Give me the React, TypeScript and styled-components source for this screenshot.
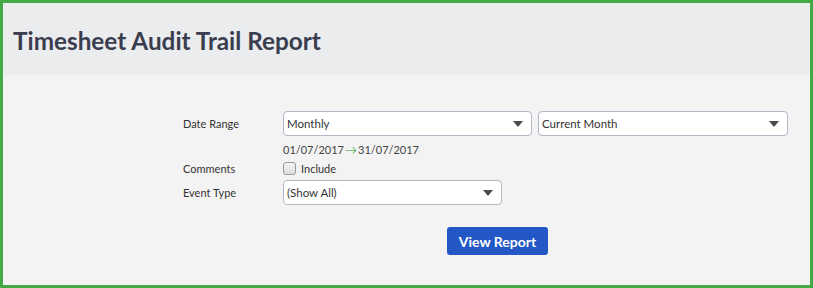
import React from "react";
import styled, { createGlobalStyle } from "styled-components";

const GlobalStyle = createGlobalStyle`
  html, body {
    margin: 0;
    padding: 0;
    background: #f3f3f3;
  }
  body {
    font-family: Lato, "Liberation Sans", sans-serif;
  }
`;

const Frame = styled.div`
  box-sizing: border-box;
  width: 813px;
  height: 288px;
  border: 3px solid #44a944;
  background: #f3f3f3;
  display: flex;
  flex-direction: column;
`;

const Header = styled.div`
  height: 72px;
  background: #ebecee;
  display: flex;
  align-items: center;
  padding-left: 10px;
`;

const Title = styled.h1`
  margin: 0;
  font-size: 24.3px;
  font-weight: 700;
  color: #3a3d4e;
  padding-top: 2px;
`;

const Form = styled.div`
  display: flex;
  flex-direction: column;
  padding: 36px 0 0 180px;
`;

const Row = styled.div<{ gap?: number }>`
  display: flex;
  align-items: center;
  margin-bottom: ${({ gap }) => gap ?? 0}px;
`;

const Label = styled.div`
  width: 100px;
  font-size: 11px;
  color: #333;
`;

const Field = styled.div`
  display: flex;
  gap: 6px;
`;

const SelectBox = styled.div<{ width: number }>`
  box-sizing: border-box;
  width: ${({ width }) => width}px;
  height: 25px;
  background: #fff;
  border: 1px solid #b7b5c6;
  border-radius: 4px;
  display: flex;
  align-items: center;
  justify-content: space-between;
  padding: 0 5px 0 3px;
  font-size: 11.5px;
  color: #333;
`;

const Caret = styled.span`
  width: 0;
  height: 0;
  border-left: 5px solid transparent;
  border-right: 5px solid transparent;
  border-top: 6px solid #4a4a4a;
  margin-right: 3px;
`;

const DateText = styled.div`
  margin-left: 100px;
  font-size: 11px;
  color: #444;
  display: flex;
  align-items: center;
  height: 25px;
  padding-top: 1px;
`;

const Arrow = styled.span`
  color: #5cb85c;
  margin: 0 1px;
  font-size: 12px;
`;

const Check = styled.span`
  box-sizing: border-box;
  width: 13px;
  height: 13px;
  border: 1px solid #9a9a9a;
  border-radius: 3px;
  background: linear-gradient(#f4f4f4, #dcdcdc);
  margin-right: 5px;
`;

const CheckLabel = styled.span`
  font-size: 11px;
  color: #333;
`;

const Button = styled.button`
  margin: 22px 0 0 264px;
  width: 101px;
  height: 28px;
  border: none;
  border-radius: 3px;
  background: #2257c5;
  color: #fff;
  font-family: Lato, "Liberation Sans", sans-serif;
  font-weight: 700;
  font-size: 14px;
  padding: 0;
`;

function Select({ value, width }: { value: string; width: number }) {
  return (
    <SelectBox width={width}>
      <span>{value}</span>
      <Caret />
    </SelectBox>
  );
}

export default function App() {
  return (
    <>
      <GlobalStyle />
      <Frame>
        <Header>
          <Title>Timesheet Audit Trail Report</Title>
        </Header>
        <Form>
          <Row>
            <Label>Date Range</Label>
            <Field>
              <Select value="Monthly" width={249} />
              <Select value="Current Month" width={250} />
            </Field>
          </Row>
          <DateText>
            01/07/2017<Arrow>→</Arrow>31/07/2017
          </DateText>
          <Row gap={5}>
            <Label>Comments</Label>
            <Check />
            <CheckLabel>Include</CheckLabel>
          </Row>
          <Row>
            <Label>Event Type</Label>
            <Select value="(Show All)" width={219} />
          </Row>
          <Button>View Report</Button>
        </Form>
      </Frame>
    </>
  );
}
